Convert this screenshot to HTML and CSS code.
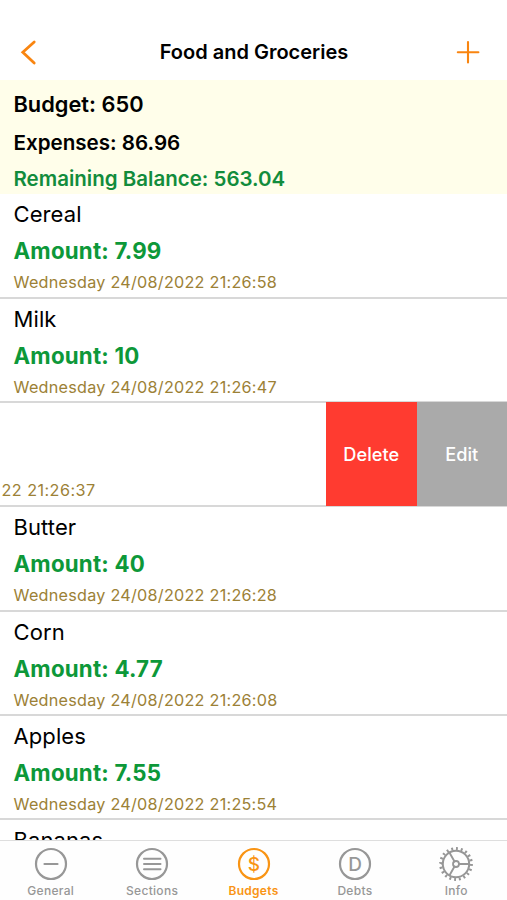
FILE: index.html
```html
<!DOCTYPE html>
<html lang="en">
<head>
  <meta charset="UTF-8" />
  <title>Food and Groceries</title>
  <meta name="viewport" content="width=device-width, initial-scale=1.0" />
  <link rel="stylesheet" href="styles.css">
</head>
<body>
  <div class="app">
    <header class="navbar">
      <svg class="nav-icon" viewBox="0 0 32 32"><path d="M22.2 6 L10.8 16.3 L22.2 27" stroke-width="2.8" /></svg>
      <h1>Food and Groceries</h1>
      <svg class="nav-icon" viewBox="0 0 32 32"><path d="M16 6 V26.5 M5.8 16.2 H26.4" stroke-width="2.1" /></svg>
    </header>

    <section class="totals">
      <div class="budget">Budget: 650</div>
      <div class="expenses">Expenses: 86.96</div>
      <div class="balance">Remaining Balance: 563.04</div>
    </section>

    <main class="list">
      <div class="item">
        <div class="name">Cereal</div>
        <div class="amount">Amount: 7.99</div>
        <div class="date">Wednesday 24/08/2022 21:26:58</div>
      </div>
      <div class="item">
        <div class="name">Milk</div>
        <div class="amount">Amount: 10</div>
        <div class="date">Wednesday 24/08/2022 21:26:47</div>
      </div>
      <div class="item swiped">
        <div class="content">
          <div class="date">22 21:26:37</div>
        </div>
        <button class="delete">Delete</button>
        <button class="edit">Edit</button>
      </div>
      <div class="item">
        <div class="name">Butter</div>
        <div class="amount">Amount: 40</div>
        <div class="date">Wednesday 24/08/2022 21:26:28</div>
      </div>
      <div class="item">
        <div class="name">Corn</div>
        <div class="amount">Amount: 4.77</div>
        <div class="date">Wednesday 24/08/2022 21:26:08</div>
      </div>
      <div class="item">
        <div class="name">Apples</div>
        <div class="amount">Amount: 7.55</div>
        <div class="date">Wednesday 24/08/2022 21:25:54</div>
      </div>
      <div class="item">
        <div class="name">Bananas</div>
      </div>
    </main>

    <nav class="tabbar">
      <a class="tab">
        <svg viewBox="0 0 36 36"><circle cx="18" cy="18" r="15" /><path d="M11.5 18 H24.5" /></svg>
        <span>General</span>
      </a>
      <a class="tab">
        <svg viewBox="0 0 36 36"><circle cx="18" cy="18" r="15" /><path d="M10 12.8 H26.5 M10 18 H26.5 M10 23.2 H26.5" stroke-width="2" /></svg>
        <span>Sections</span>
      </a>
      <a class="tab active">
        <svg viewBox="0 0 36 36"><circle cx="18" cy="18" r="15" /><text x="18" y="24.6">$</text></svg>
        <span>Budgets</span>
      </a>
      <a class="tab">
        <svg viewBox="0 0 36 36"><circle cx="18" cy="18" r="15" /><text x="18" y="25">D</text></svg>
        <span>Debts</span>
      </a>
      <a class="tab">
        <svg viewBox="0 0 36 36">
          <circle cx="18" cy="18" r="13.2" stroke-width="2" />
          <circle class="teeth" cx="18" cy="18" r="15.4" pathLength="200" />
          <circle cx="18" cy="18" r="3" stroke-width="1.8" />
          <path d="M21 18 H31 M16.5 15.4 L11.4 6.6 M16.5 20.6 L11.4 29.4" stroke-width="1.9" />
        </svg>
        <span>Info</span>
      </a>
    </nav>
  </div>
</body>
</html>
```
FILE: styles.css
```css
* {
  box-sizing: border-box;
}

body {
  font-family: Inter, "Liberation Sans", sans-serif;
  margin: 0;
  background: #fff;
  color: #000;
}

.app {
  display: flex;
  flex-direction: column;
  height: 900px;
  overflow: hidden;
}

.navbar {
  display: flex;
  justify-content: space-between;
  align-items: center;
  height: 80px;
  flex-shrink: 0;
  padding: 24px 23px 0 12px;
}

.navbar h1 {
  margin: 0 0 0 12px;
  font-size: 20px;
  font-weight: 600;
}

.nav-icon {
  width: 32px;
  height: 32px;
  fill: none;
  stroke: #f98510;
  stroke-linecap: round;
}

.totals {
  height: 114.4px;
  flex-shrink: 0;
  padding: 6px 13.5px 0;
  background: #fffeea;
  font-weight: 600;
  white-space: nowrap;
}

.budget {
  font-size: 21.8px;
  line-height: 37px;
}

.expenses {
  font-size: 20.6px;
  line-height: 39px;
}

.balance {
  font-size: 20.5px;
  line-height: 33px;
  color: #128c3c;
}

.list {
  flex: 1;
  min-height: 0;
  overflow: hidden;
}

.item {
  height: 104.3px;
  padding: 2px 13.5px 0;
  border-bottom: 2px solid #d8d8d8;
  white-space: nowrap;
}

.name {
  font-size: 22px;
  font-weight: 430;
  line-height: 37px;
  letter-spacing: 0.1px;
}

.amount {
  font-size: 22.3px;
  font-weight: 650;
  line-height: 35px;
  letter-spacing: 0.2px;
  color: #0d9839;
}

.date {
  font-size: 16.2px;
  line-height: 29px;
  letter-spacing: 0.25px;
  color: #9c8136;
}

.swiped {
  display: flex;
  padding: 0;
}

.swiped .content {
  width: 326px;
  padding: 73.5px 0 0 1.5px;
}

.swiped .date {
  letter-spacing: 0.45px;
}

.swiped button {
  width: 90.5px;
  height: 104.3px;
  margin-top: -1px;
  padding: 0;
  border: none;
  font-family: inherit;
  font-size: 18.2px;
  font-weight: 500;
  color: #fff;
}

.delete {
  background: #ff3b30;
}

.edit {
  background: #aaa;
}

.tabbar {
  display: flex;
  height: 60px;
  flex-shrink: 0;
  border-top: 1px solid #dedede;
  background: #fefefe;
}

.tab {
  flex: 1;
  display: flex;
  flex-direction: column;
  align-items: center;
  padding-top: 5px;
  font-size: 12px;
  font-weight: 500;
  line-height: 18px;
  letter-spacing: 0.3px;
  color: #979797;
}

.tab svg {
  width: 36px;
  height: 36px;
  fill: none;
  stroke: currentColor;
  stroke-width: 2.2;
  stroke-linecap: round;
}

.tab text {
  fill: currentColor;
  stroke: none;
  font-size: 19px;
  font-weight: 500;
  letter-spacing: 0;
  text-anchor: middle;
}

.tab .teeth {
  stroke-width: 3;
  stroke-linecap: butt;
  stroke-dasharray: 4 6;
}

.tab.active {
  color: #f99414;
  font-weight: 600;
}
```
